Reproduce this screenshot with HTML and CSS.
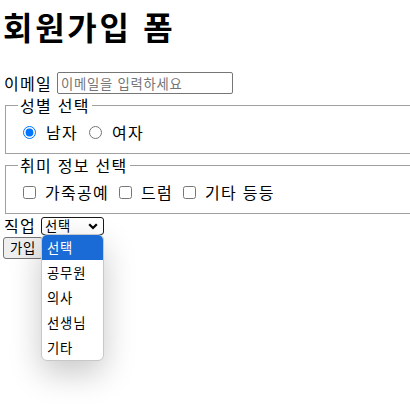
FILE: index.html
```html
<!DOCTYPE html>
<html lang="ko">
<head>
<meta charset="utf-8">
<title>회원가입 폼</title>
<link rel="stylesheet" href="styles.css">
</head>
<body>
<div class="page">
<h1 class="title">회원가입 폼</h1>
<form class="form">
  <div class="row email-row">
    <label class="label" for="email">이메일</label>
    <input class="text-input" id="email" type="email" placeholder="이메일을 입력하세요">
  </div>
  <fieldset class="group">
    <legend class="legend">성별 선택</legend>
    <div class="choices">
      <label class="choice"><input class="radio" type="radio" name="gender" checked>남자</label>
      <label class="choice"><input class="radio" type="radio" name="gender">여자</label>
    </div>
  </fieldset>
  <fieldset class="group">
    <legend class="legend">취미 정보 선택</legend>
    <div class="choices">
      <label class="choice"><input class="check" type="checkbox">가죽공예</label>
      <label class="choice"><input class="check" type="checkbox">드럼</label>
      <label class="choice"><input class="check" type="checkbox">기타 등등</label>
    </div>
  </fieldset>
  <div class="row job-row">
    <span class="label">직업</span>
    <div class="select-wrap">
      <div class="select-box">
        <span class="select-value">선택</span>
        <svg class="chevron" width="10" height="7" viewBox="0 0 10 7"><path d="M1.2 1.2 L5 5 L8.8 1.2" fill="none" stroke="#000" stroke-width="2.2"/></svg>
      </div>
      <ul class="menu">
        <li class="option selected">선택</li>
        <li class="option">공무원</li>
        <li class="option">의사</li>
        <li class="option">선생님</li>
        <li class="option">기타</li>
      </ul>
    </div>
  </div>
  <div class="row button-row">
    <button class="submit" type="button">가입</button>
  </div>
</form>
</div>
</body>
</html>
```
FILE: styles.css
```css
body {
  margin: 0;
  font-family: "Noto Sans CJK KR", "Noto Sans", sans-serif;
  font-size: 16px;
  line-height: 22px;
  color: #000;
  background: #fff;
  letter-spacing: 0.08em;
}
.page {
  box-sizing: border-box;
  min-height: 411px;
  padding: 0 0 0 3px;
}
.title {
  margin: 8px 0 27px 0;
  font-size: 32px;
  line-height: 37px;
  font-weight: 700;
  letter-spacing: 0.085em;
}
.form {
  margin: 0;
}
.row {
  display: flex;
  align-items: center;
}
.email-row {
  height: 22px;
  gap: 5px;
}
.label {
  padding-left: 1px;
}
.text-input {
  box-sizing: border-box;
  width: 176px;
  height: 22px;
  margin: 0;
  padding: 1px 3px;
  border: 1px solid #767676;
  border-radius: 2px;
  font-family: "Noto Sans CJK KR", sans-serif;
  font-size: 13.33px;
  line-height: 18px;
  letter-spacing: 0.055em;
}
.text-input::placeholder {
  color: #757575;
}
.group {
  margin: 0 0 0 2px;
  padding: 0 12px 10px 12px;
  border: 1px solid #a0a0a0;
  border-right: none;
}
.legend {
  padding: 0 2px;
  line-height: 22px;
}
.choices {
  display: flex;
  align-items: center;
  height: 22px;
  margin-top: 5px;
}
.choice {
  display: flex;
  align-items: center;
  white-space: pre;
}
.radio {
  width: 13px;
  height: 13px;
  margin: 1px 10px 0 5px;
}
.choice + .choice .radio {
  margin-left: 11px;
}
.check {
  width: 13px;
  height: 13px;
  margin: 1px 9px 0 5px;
}
.choice + .choice .check {
  margin-left: 10px;
}
.job-row {
  height: 21px;
  gap: 5px;
}
.select-wrap {
  position: relative;
}
.select-box {
  box-sizing: border-box;
  width: 63px;
  height: 18px;
  display: flex;
  align-items: center;
  justify-content: space-between;
  padding: 0 4px 0 3px;
  border: 1px solid #1a1a1a;
  border-radius: 3px;
  font-size: 13.33px;
  line-height: 16px;
  letter-spacing: 0.06em;
  margin-top: 3px;
}
.chevron {
  display: block;
  margin-right: 1px;
}
.menu {
  position: absolute;
  top: 20px;
  left: 0;
  z-index: 2;
  width: 63px;
  margin: 0;
  padding: 0;
  list-style: none;
  background: #fff;
  border: 1px solid #c8c8c8;
  border-radius: 6px;
  box-sizing: border-box;
  overflow: hidden;
  box-shadow: 0 12px 32px rgba(0, 0, 0, 0.22);
}
.option {
  height: 25px;
  line-height: 25px;
  padding-left: 5px;
  font-size: 13.33px;
  letter-spacing: 0.06em;
}
.option.selected {
  background: #1a6bd6;
  color: #fff;
}
.button-row {
  margin-top: 2px;
}
.submit {
  height: 22px;
  padding: 0 6px;
  border: 1px solid #767676;
  border-radius: 3px;
  background: #efefef;
  font-family: "Noto Sans CJK KR", sans-serif;
  font-size: 13.33px;
  line-height: 18px;
  letter-spacing: 0.06em;
  color: #000;
}
```
